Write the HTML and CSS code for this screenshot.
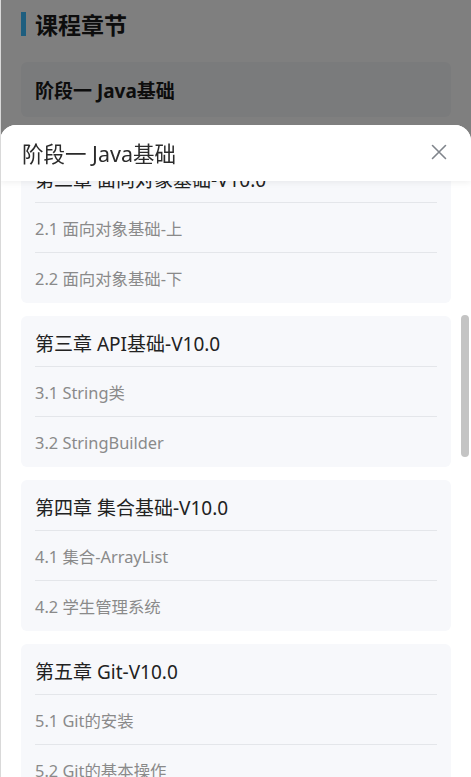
FILE: index.html
```html
<!DOCTYPE html>
<html lang="zh-CN">
<head>
<meta charset="utf-8">
<title>课程章节</title>
<link rel="stylesheet" href="styles.css">
</head>
<body>
<div class="page">
  <div class="page-title"><span class="bar"></span><span>课程章节</span></div>
  <div class="stage-card">阶段一 Java基础</div>
</div>
<div class="mask"></div>
<div class="sheet">
  <div class="sheet-header">
    <span class="sheet-title">阶段一 Java基础</span>
    <svg class="close" width="16" height="16" viewBox="0 0 16 16"><path d="M1.5 1.5L14.5 14.5M14.5 1.5L1.5 14.5" stroke="#80858c" stroke-width="1.6" fill="none" stroke-linecap="round"/></svg>
  </div>
  <div class="sheet-body">
    <div class="list">
      <div class="card">
        <div class="card-title">第二章 面向对象基础-V10.0</div>
        <div class="item">2.1 面向对象基础-上</div>
        <div class="item">2.2 面向对象基础-下</div>
      </div>
      <div class="card">
        <div class="card-title">第三章 API基础-V10.0</div>
        <div class="item">3.1 String类</div>
        <div class="item">3.2 StringBuilder</div>
      </div>
      <div class="card">
        <div class="card-title">第四章 集合基础-V10.0</div>
        <div class="item">4.1 集合-ArrayList</div>
        <div class="item">4.2 学生管理系统</div>
      </div>
      <div class="card">
        <div class="card-title">第五章 Git-V10.0</div>
        <div class="item">5.1 Git的安装</div>
        <div class="item">5.2 Git的基本操作</div>
      </div>
    </div>
    <div class="thumb"></div>
  </div>
</div>
<div class="edge"></div>
</body>
</html>
```
FILE: styles.css
```css
html, body {
  margin: 0;
  padding: 0;
}
body {
  width: 471px;
  height: 777px;
  overflow: hidden;
  background: #ffffff;
  font-family: "Noto Sans", "Noto Sans CJK SC", sans-serif;
  color: #222;
}
.page {
  padding: 12px 20px 0 21px;
}
.page-title {
  display: flex;
  align-items: center;
  gap: 9px;
  height: 24px;
  font-size: 23px;
  font-weight: 700;
  color: #1a1a1a;
}
.bar {
  width: 5px;
  height: 24px;
  background: #3cbcff;
}
.stage-card {
  margin-top: 26px;
  height: 55px;
  border-radius: 6px;
  background: #f5f6f8;
  padding-left: 14px;
  display: flex;
  align-items: center;
  font-size: 19px;
  font-weight: 700;
  color: #1a1a1a;
}
.mask {
  position: fixed;
  inset: 0;
  background: rgba(0, 0, 0, 0.5);
}
.sheet {
  position: fixed;
  left: 0;
  right: 0;
  top: 125px;
  bottom: 0;
  background: #ffffff;
  border-radius: 16px 16px 0 0;
  overflow: hidden;
  display: flex;
  flex-direction: column;
}
.sheet-header {
  position: relative;
  z-index: 2;
  flex: none;
  height: 56px;
  padding: 0 24px 0 22px;
  display: flex;
  align-items: center;
  justify-content: space-between;
  background: #ffffff;
  box-shadow: 0 2px 6px rgba(0, 0, 0, 0.06);
}
.sheet-title {
  font-size: 21.5px;
  color: #2b2b2b;
  margin-top: -2px;
}
.close {
  display: block;
  margin-top: -2px;
}
.sheet-body {
  position: relative;
  flex: 1;
  overflow: hidden;
  padding: 0 20px 0 21px;
}
.list {
  margin-top: -29px;
  display: flex;
  flex-direction: column;
  gap: 13px;
}
.card {
  background: #f7f8fb;
  border-radius: 6px;
  padding: 0 14px;
}
.card-title {
  height: 46px;
  padding-top: 4px;
  display: flex;
  align-items: center;
  font-size: 19px;
  color: #222;
  border-bottom: 1px solid #e4e6ea;
}
.item {
  height: 49px;
  display: flex;
  align-items: center;
  font-size: 16.4px;
  color: #8a8a8a;
  border-bottom: 1px solid #e4e6ea;
}
.item:last-child {
  height: 50px;
  border-bottom: none;
}
.thumb {
  position: absolute;
  right: 2px;
  top: 134px;
  width: 8px;
  height: 142px;
  border-radius: 4px;
  background: #c4c4c4;
}
.edge {
  position: fixed;
  left: 0;
  top: 0;
  bottom: 0;
  width: 1px;
  background: #d9d9d9;
}
```
